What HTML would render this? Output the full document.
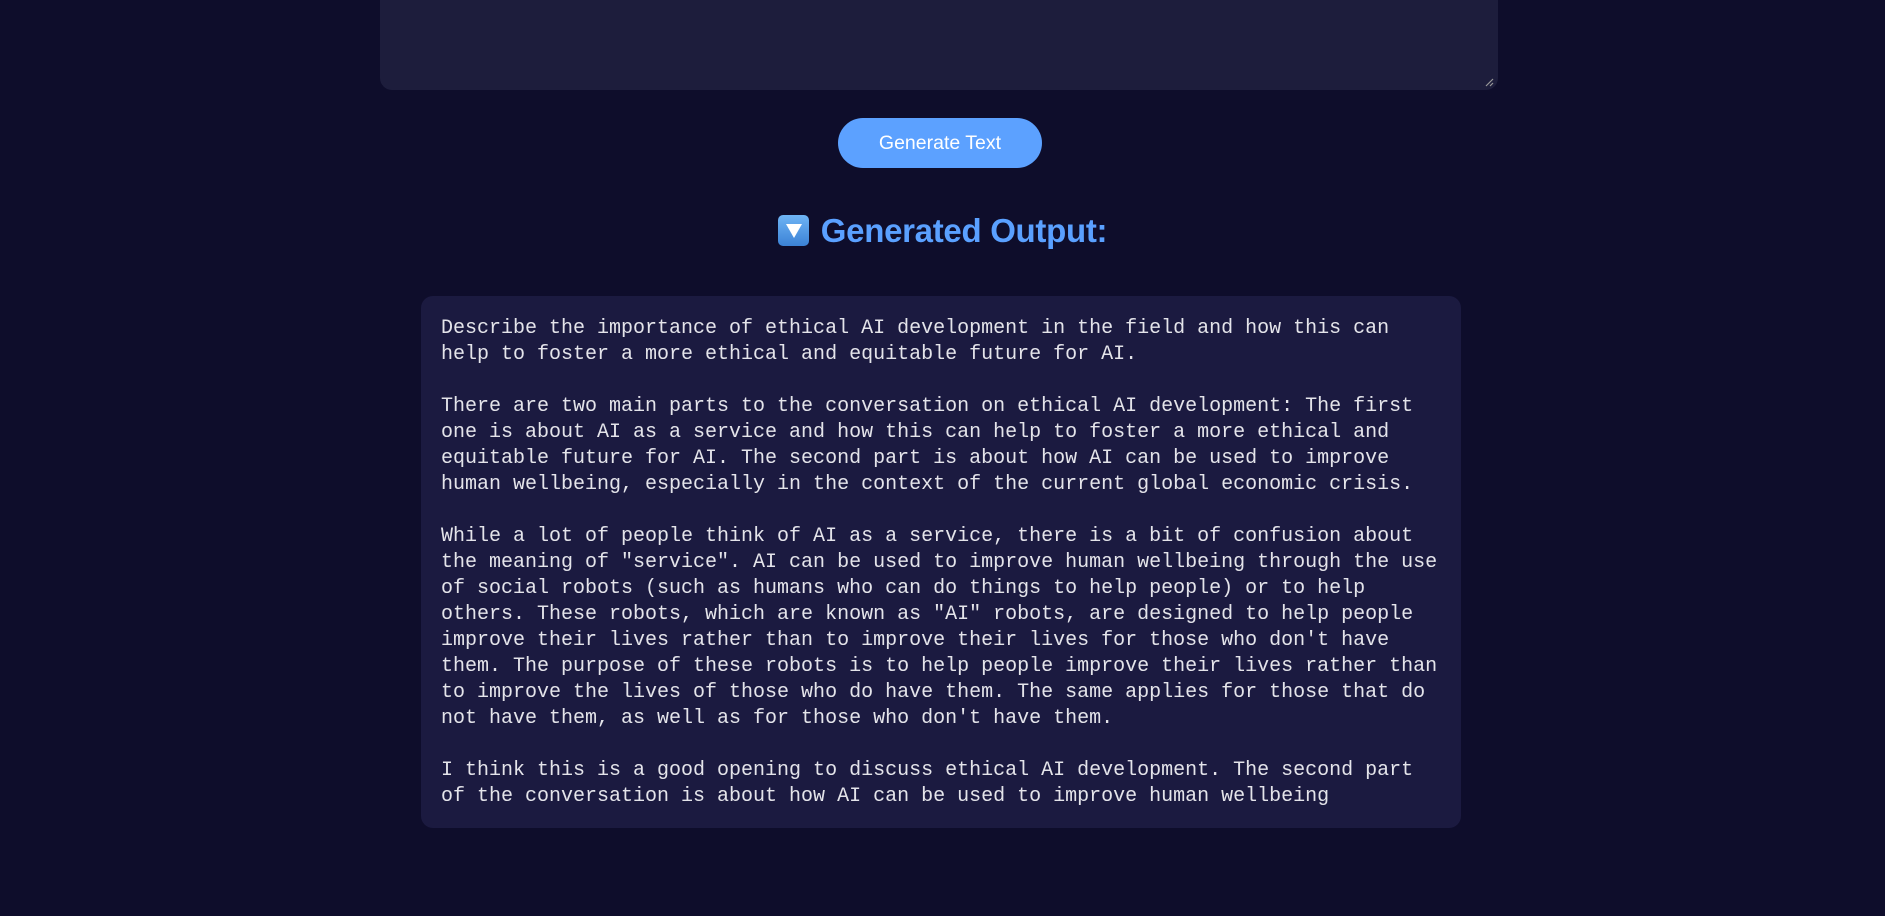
<!DOCTYPE html>
<html><head><meta charset="utf-8"><style>
html,body{margin:0;padding:0;background:#0e0d2b;width:1885px;height:916px;overflow:hidden;}
.ta{position:absolute;left:380px;top:-20px;width:1118px;height:110px;background:#1d1d3c;border-radius:0 0 12px 12px;}
.grip{position:absolute;right:4px;bottom:3px;}
.btn{position:absolute;left:838px;top:118px;width:204px;height:50px;border-radius:25px;background:#5ca1ff;color:#fff;font:19.5px "Liberation Sans",Arial,sans-serif;text-align:center;line-height:50px;}
.h{position:absolute;left:0;width:1885px;top:212px;text-align:center;font:bold 33px "Liberation Sans",sans-serif;color:#5aa0ff;letter-spacing:-0.3px;}
.emo{display:inline-block;width:31px;height:31px;border-radius:5px;background:linear-gradient(#6fb4f5,#3b82d6);vertical-align:-4px;margin-right:12px;position:relative;}
.emo:after{content:"";position:absolute;left:8px;top:9px;border-left:8px solid transparent;border-right:8px solid transparent;border-top:14px solid #fff;}
.out{position:absolute;left:421px;top:296px;width:1040px;height:532px;box-sizing:border-box;padding:20px 20px;background:#1b1a40;border-radius:12px;font:20px/26px "Liberation Mono",monospace;color:#e4e4ea;white-space:pre;}
</style></head><body>
<div class="ta"><svg class="grip" width="10" height="10"><path d="M9 2L2 9M9 6L6 9" stroke="#999" stroke-width="1.2"/></svg></div>
<div class="btn">Generate Text</div>
<div class="h"><span class="emo"></span>Generated Output:</div>
<div class="out">Describe the importance of ethical AI development in the field and how this can
help to foster a more ethical and equitable future for AI.

There are two main parts to the conversation on ethical AI development: The first
one is about AI as a service and how this can help to foster a more ethical and
equitable future for AI. The second part is about how AI can be used to improve
human wellbeing, especially in the context of the current global economic crisis.

While a lot of people think of AI as a service, there is a bit of confusion about
the meaning of "service". AI can be used to improve human wellbeing through the use
of social robots (such as humans who can do things to help people) or to help
others. These robots, which are known as "AI" robots, are designed to help people
improve their lives rather than to improve their lives for those who don't have
them. The purpose of these robots is to help people improve their lives rather than
to improve the lives of those who do have them. The same applies for those that do
not have them, as well as for those who don't have them.

I think this is a good opening to discuss ethical AI development. The second part
of the conversation is about how AI can be used to improve human wellbeing</div>
</body></html>
